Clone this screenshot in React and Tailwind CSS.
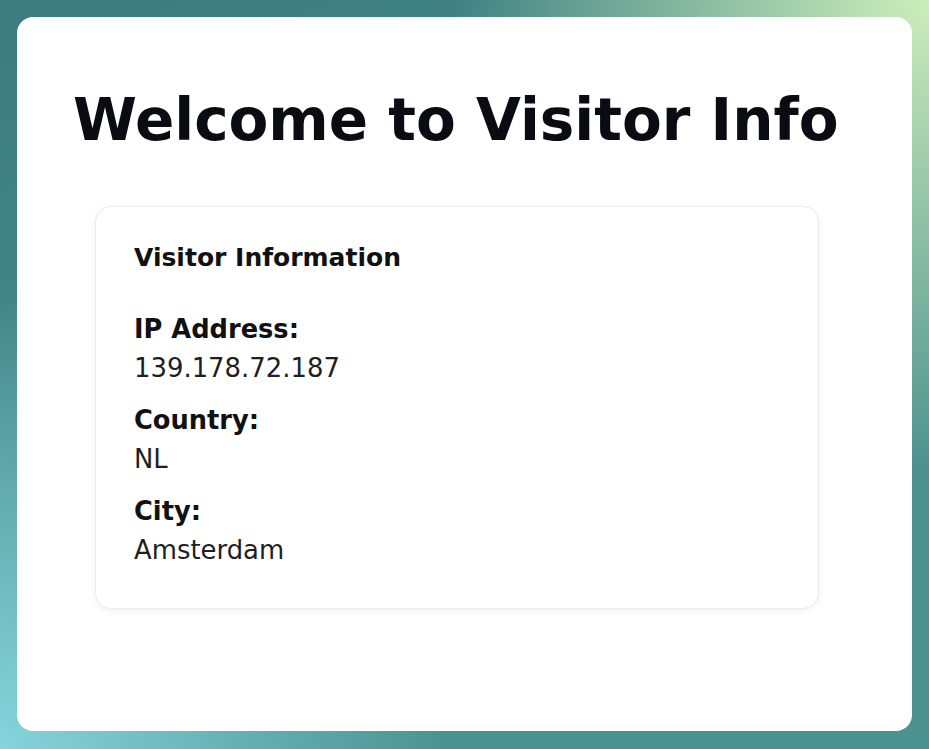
import React from 'react';

const visitor = {
  ip: '139.178.72.187',
  country: 'NL',
  city: 'Amsterdam',
};

const InfoRow = ({ label, value }) => (
  <div>
    <p className="text-[25.7px] font-bold leading-[39px] text-[#111111]">{label}</p>
    <p className="text-[25.9px] leading-[39px] text-[#1f1f1f]">{value}</p>
  </div>
);

const App = () => {
  return (
    <div
      className="min-h-screen w-full p-[17px] bg-[radial-gradient(circle_at_100%_0%,#cdeebb_0%,rgba(205,238,187,0)_40%),radial-gradient(circle_at_0%_100%,#86d4dc_0%,rgba(134,212,220,0)_38%),linear-gradient(160deg,#3c7b7e_0%,#4a8f8e_55%,#4b9291_100%)]"
      style={{ fontFamily: '"DejaVu Sans", sans-serif' }}
    >
      <div className="h-[714px] rounded-[16px] bg-white pl-[56px] pt-[71px]">
        <h1 className="text-[58px] font-bold leading-[64px] text-[#0b0b14]">
          Welcome to Visitor Info
        </h1>

        <div className="ml-[22px] mt-[54px] w-[724px] rounded-[16px] border border-[#ebebeb] bg-white shadow-[0_2px_6px_rgba(0,0,0,0.06)]">
          <div className="px-[38px] pt-[38px] pb-[40px]">
            <h2 className="text-[25px] font-bold leading-none text-[#111111]">
              Visitor Information
            </h2>
          </div>
          <div className="flex flex-col gap-[13px] px-[38px] pb-[38px]">
            <InfoRow label="IP Address:" value={visitor.ip} />
            <InfoRow label="Country:" value={visitor.country} />
            <InfoRow label="City:" value={visitor.city} />
          </div>
        </div>
      </div>
    </div>
  );
};

export default App;
